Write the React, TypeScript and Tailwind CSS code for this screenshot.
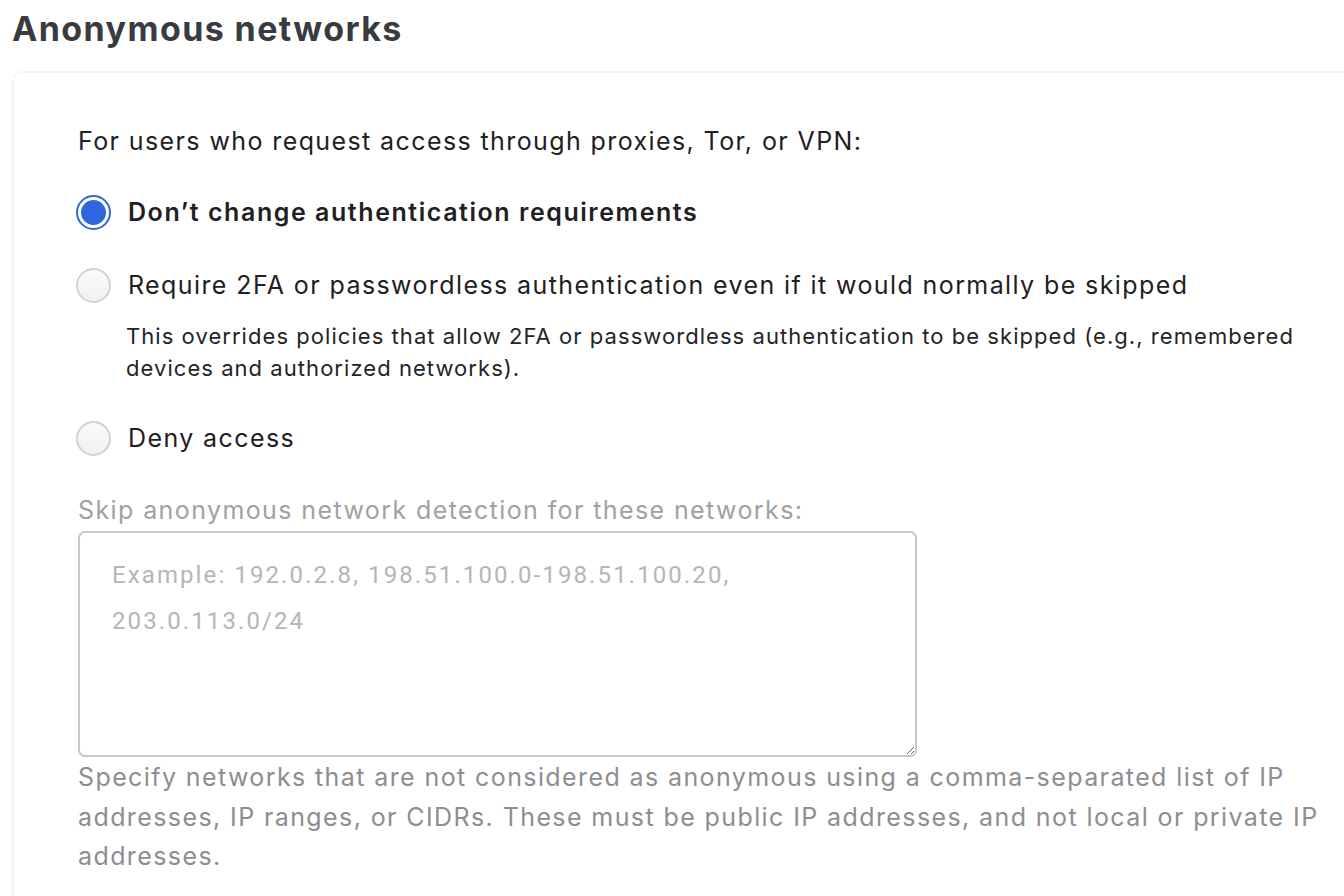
import { useState } from 'react'

type Option = {
  id: string
  label: string
  description?: string
}

const options: Option[] = [
  { id: 'none', label: 'Don’t change authentication requirements' },
  {
    id: 'require',
    label: 'Require 2FA or passwordless authentication even if it would normally be skipped',
    description:
      'This overrides policies that allow 2FA or passwordless authentication to be skipped (e.g., remembered devices and authorized networks).',
  },
  { id: 'deny', label: 'Deny access' },
]

function Radio({ checked }: { checked: boolean }) {
  if (checked) {
    return (
      <span className="flex h-[35px] w-[35px] shrink-0 items-center justify-center rounded-full border-2 border-[#2f66df] bg-white">
        <span className="block h-[25px] w-[25px] rounded-full bg-[#2f66df]" />
      </span>
    )
  }
  return (
    <span className="block h-[35px] w-[35px] shrink-0 rounded-full border-2 border-[#d2d2d4] bg-gradient-to-b from-[#fbfbfb] to-[#f0f0f1]" />
  )
}

export default function App() {
  const [selected, setSelected] = useState('none')

  return (
    <div className="h-[896px] w-[1344px] overflow-hidden bg-white font-['Inter',sans-serif] text-[#1f2023]">
      <h1 className="pl-[12px] pt-[8px] text-[34px] font-bold leading-[42px] tracking-[1.4px] text-[#3a3b3f]">
        Anonymous networks
      </h1>

      <div className="ml-[12px] mt-[21px] h-[900px] w-[1360px] rounded-[10px] border-2 border-[#f4f4f5] pl-[64px] pr-[30px] pt-[50px]">
        <p className="text-[25px] leading-[36px] tracking-[1.4px]">
          For users who request access through proxies, Tor, or VPN:
        </p>

        <div className="mt-[26px] flex flex-col">
          {options.map((o) => {
            const on = selected === o.id
            return (
              <div key={o.id} className="mb-[19px] flex flex-col">
                <label className="flex cursor-pointer items-center gap-[17px] py-[9px]" onClick={() => setSelected(o.id)}>
                  <span className="-ml-[2px]">
                    <Radio checked={on} />
                  </span>
                  <span className={`text-[25px] leading-[36px] ${on ? 'font-semibold tracking-[1.55px]' : 'tracking-[1.4px]'}`}>
                    {o.label}
                  </span>
                </label>
                {o.description && (
                  <p className="mb-[8px] mt-[8px] w-[1245px] pl-[48px] text-[22px] leading-[32px] tracking-[1.05px] text-[#232427]">
                    {o.description}
                  </p>
                )}
              </div>
            )
          })}
        </div>

        <p className="mt-[8px] text-[25px] leading-[36px] tracking-[1.4px] text-[#a1a1a5]">
          Skip anonymous network detection for these networks:
        </p>
        <textarea
          className="mt-[3px] block h-[226px] w-[839px] resize-y rounded-[7px] border-2 border-[#c8c8cc] px-[32px] py-[19px] font-['Roboto',sans-serif] text-[24px] leading-[46px] tracking-[2.1px] text-[#1f2023] outline-none placeholder:text-[#b5b5b8]"
          placeholder="Example: 192.0.2.8, 198.51.100.0-198.51.100.20, 203.0.113.0/24"
        />
        <p className="mt-[1px] w-[1256px] text-[25px] leading-[39.5px] tracking-[1.4px] text-[#8d8d92]">
          Specify networks that are not considered as anonymous using a comma-separated list of IP addresses, IP ranges, or CIDRs. These must be public IP addresses, and not local or private IP addresses.
        </p>
      </div>
    </div>
  )
}
